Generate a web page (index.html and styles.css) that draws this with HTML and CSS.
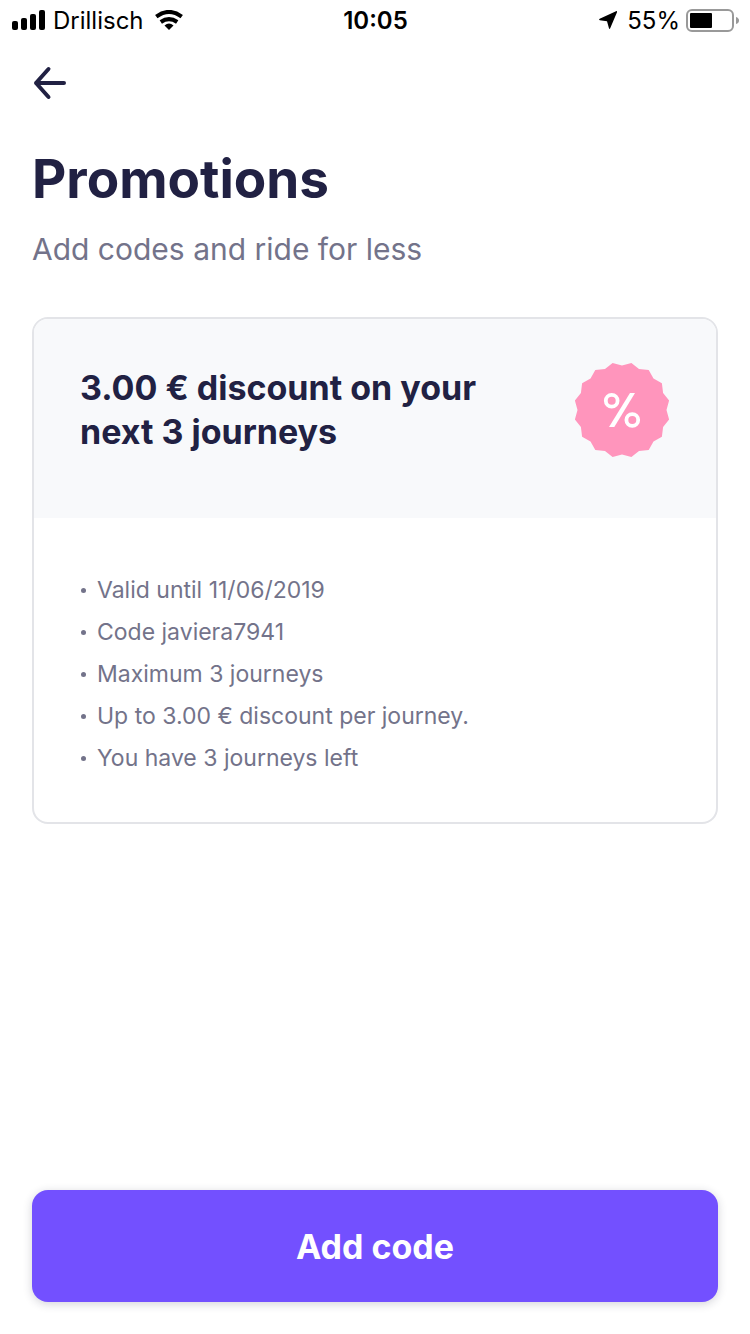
FILE: index.html
```html
<!DOCTYPE html>
<html lang="en">

<head>
    <meta charset="UTF-8">
    <meta name="viewport" content="width=device-width, initial-scale=1.0">
    <title>Promotions</title>
    <link rel="stylesheet" href="styles.css">
</head>

<body>
    <div class="status-bar">
        <div class="status-left">
            <svg class="signal" width="33" height="20" viewBox="0 0 33 20" aria-hidden="true">
                <rect x="0" y="11" width="6" height="9" rx="2" />
                <rect x="9" y="8" width="6" height="12" rx="2" />
                <rect x="18" y="4" width="6" height="16" rx="2" />
                <rect x="27" y="0" width="6" height="20" rx="2" />
            </svg>
            <span class="carrier">Drillisch</span>
            <svg class="wifi" width="28" height="20" viewBox="0 0 28 20" aria-hidden="true">
                <path d="M1.3 6.6Q14-2.800 26.700 6.600" fill="none" stroke="#000" stroke-width="4" />
                <path d="M5.800 12Q14 6.200 22.200 12" fill="none" stroke="#000" stroke-width="4" />
                <path d="M9.500 15.500Q14 11.500 18.500 15.500L14 20Z" />
            </svg>
        </div>
        <span class="time">10:05</span>
        <div class="status-right">
            <svg class="location" width="18" height="18" viewBox="0 0 18 18" aria-hidden="true">
                <path d="M17 0.200Q18.400-.2 18 1.200L11.200 17.300Q10.400 18.600 9.900 17L8 10.300L.8 9.200Q-.7 8.600 .7 7.700Z" />
            </svg>
            <span>55%</span>
            <svg class="battery" width="53" height="23" viewBox="0 0 53 23" aria-hidden="true">
                <rect x="1" y="1" width="46" height="21" rx="5" fill="none" stroke="#999" stroke-width="2" />
                <rect x="4" y="4" width="22" height="15" rx="1" />
                <path d="M50 8Q53 9 53 11.500T50 15Z" fill="#999" />
            </svg>
        </div>
    </div>

    <main class="page">
        <button class="back" type="button" aria-label="Back">
            <svg width="34" height="34" viewBox="0 0 34 34" aria-hidden="true">
                <path d="M16.500 3L4 17L16.500 31M4 17H32" fill="none" stroke="#212143" stroke-width="4" stroke-linecap="round" stroke-linejoin="round" />
            </svg>
        </button>

        <h1>Promotions</h1>
        <p class="subtitle">Add codes and ride for less</p>

        <section class="card">
            <div class="card-header">
                <h2>3.00 € discount on your next 3 journeys</h2>
                <svg class="badge" width="96" height="96" viewBox="0 0 96 96" aria-hidden="true">
                    <polygon fill="#ff95bc" points="48,3.5 57.4,0.9 65,6.9 74.7,8.1 79.5,16.5 87.9,21.3 89.1,31 95.1,38.6 92.5,48 95.1,57.4 89.1,65 87.9,74.7 79.5,79.5 74.7,87.9 65,89.1 57.4,95.1 48,92.5 38.6,95.1 31,89.1 21.3,87.9 16.5,79.5 8.1,74.7 6.9,65 0.9,57.4 3.5,48 0.9,38.6 6.9,31 8.1,21.3 16.5,16.5 21.3,8.1 31,6.9 38.6,0.9" />
                    <circle cx="37.700" cy="38.700" r="5.900" fill="none" stroke="#fff" stroke-width="3.800" />
                    <circle cx="58.300" cy="58" r="5.900" fill="none" stroke="#fff" stroke-width="3.800" />
                    <path d="M56 31H61L40.300 65H35Z" fill="#fff" />
                </svg>
            </div>
            <ul class="details">
                <li>Valid until 11/06/2019</li>
                <li>Code javiera7941</li>
                <li>Maximum 3 journeys</li>
                <li>Up to 3.00 € discount per journey.</li>
                <li>You have 3 journeys left</li>
            </ul>
        </section>

        <button class="add-code" type="button">Add code</button>
    </main>
</body>

</html>
```
FILE: styles.css
```css
* {
    box-sizing: border-box;
}

body {
    display: flex;
    flex-direction: column;
    min-height: 100vh;
    margin: 0;
    background-color: #fff;
    color: #212143;
    font-family: Inter, sans-serif;
}

.status-bar {
    display: grid;
    grid-template-columns: 1fr auto 1fr;
    align-items: center;
    height: 40px;
    padding: 0 11px 0 12px;
    color: #000;
    font-size: 24px;
}

.status-left,
.status-right {
    display: flex;
    align-items: center;
    gap: 8px;
}

.status-right {
    gap: 6px;
    justify-content: flex-end;
}

.wifi {
    margin-left: 3px;
}

.location {
    margin-right: 4px;
}

.time {
    font-weight: 600;
}

.page {
    display: flex;
    flex: 1;
    flex-direction: column;
    padding: 26px 32px 32px;
}

.back {
    align-self: flex-start;
    padding: 0;
    border: none;
    background: none;
    cursor: pointer;
}

.back svg {
    display: block;
}

h1 {
    margin: 45px 0 0;
    font-size: 53px;
    font-weight: 700;
    line-height: 68px;
}

.subtitle {
    margin: 16px 0 48px;
    color: #73738a;
    font-size: 30px;
    line-height: 40px;
}

.card {
    overflow: hidden;
    border: 2px solid #e3e4e8;
    border-radius: 16px;
}

.card-header {
    display: flex;
    justify-content: space-between;
    gap: 32px;
    min-height: 199px;
    padding: 43px 46px;
    background-color: #f8f9fb;
}

h2 {
    max-width: 420px;
    margin: 4px 0 0;
    font-size: 34px;
    font-weight: 700;
    line-height: 44px;
}

.badge {
    flex: none;
}

.details {
    margin: 0;
    padding: 51px 46px 43px;
    color: #73738a;
    font-size: 23px;
    line-height: 42px;
    list-style: none;
}

.details li {
    display: flex;
    align-items: center;
    gap: 11px;
}

.details li::before {
    width: 5px;
    height: 5px;
    margin-left: 1px;
    border-radius: 50%;
    background-color: #73738a;
    content: "";
}

.add-code {
    height: 112px;
    margin-top: auto;
    border: none;
    border-radius: 16px;
    background-color: #7350ff;
    box-shadow: 0 2px 10px rgba(33, 33, 67, 0.2);
    color: #fff;
    font-family: inherit;
    font-size: 34px;
    font-weight: 700;
    cursor: pointer;
}
```
